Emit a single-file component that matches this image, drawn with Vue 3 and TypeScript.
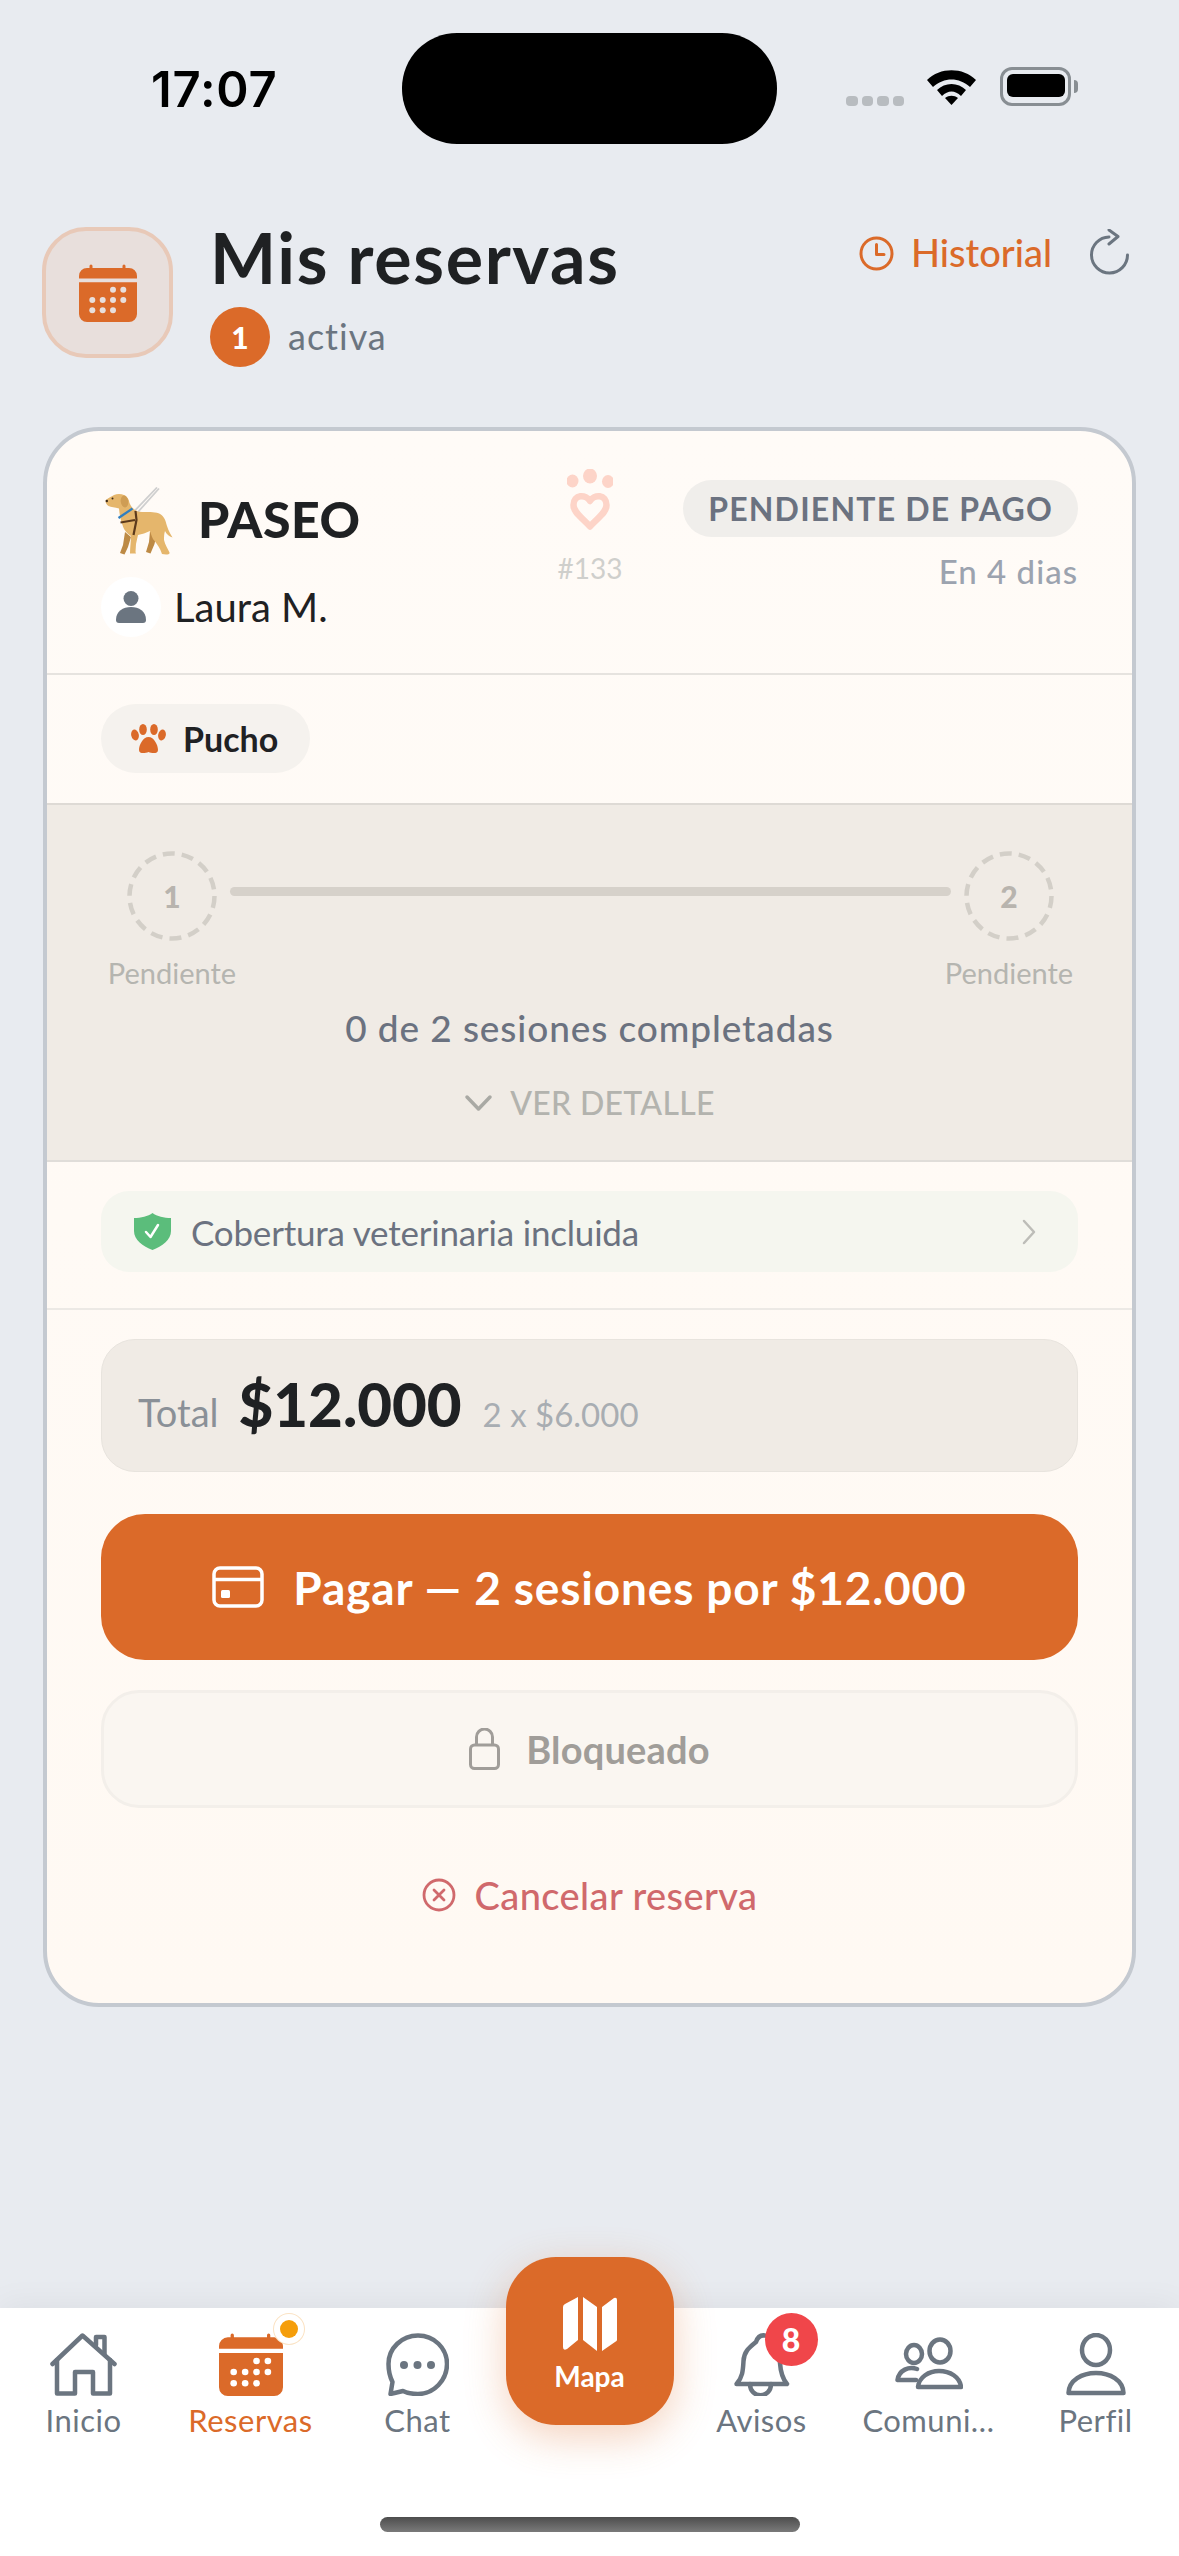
<template>
  <div class="page">
    <div class="status">
      <span class="time">17:07</span>
      <div class="island"></div>
      <div class="status-icons">
        <div class="signal"><i v-for="n in 4" :key="n"></i></div>
        <svg class="wifi" width="51" height="37" viewBox="0 0 51 37">
          <path d="M1 12 C14 -1 37 -1 50 12 L44 19 C33 9 18 9 7 19Z" />
          <path d="M11 22 C19 14 32 14 40 22 L35 28 C29 22 22 22 16 28Z" />
          <path d="M19 30 C23 27 28 27 32 30 L25.500 37Z" />
        </svg>
        <div class="battery"><span></span></div>
        <div class="battery-nub"></div>
      </div>
    </div>

    <header class="header">
      <div class="header-icon">
        <svg width="58" height="58" viewBox="0 0 58 58">
          <path fill="#db6a29" d="M10.500 4 V2 a1.500 1.500 0 0 1 3 0 V4 H43.500 V2 a1.500 1.500 0 0 1 3 0 V4 H50 a8 8 0 0 1 8 8 V14.500 H0 V12 a8 8 0 0 1 8 -8Z M0 18.300 H58 V50 a8 8 0 0 1 -8 8 H8 a8 8 0 0 1 -8 -8Z" />
          <circle v-for="d in calendarDots" :key="d.x + '-' + d.y" :cx="d.x" :cy="d.y" r="3" fill="#e8dfdc" />
        </svg>
      </div>
      <div class="header-text">
        <h1>Mis reservas</h1>
        <div class="count">
          <span class="count-badge">1</span>
          <span class="count-label">activa</span>
        </div>
      </div>
      <div class="header-actions">
        <svg width="35" height="35" viewBox="0 0 35 35" fill="none" stroke="#db6a29" stroke-width="3" stroke-linecap="round" stroke-linejoin="round">
          <circle cx="17.500" cy="17.500" r="15.500" />
          <path d="M17.500 8.500 V18.500 H25" />
        </svg>
        <span class="history">Historial</span>
        <svg class="refresh" width="40" height="46" viewBox="0 0 40 46" fill="none" stroke="#6b7580" stroke-width="3" stroke-linecap="round" stroke-linejoin="round">
          <path d="M19 8 A18 18 0 1 0 37.500 26" />
          <path d="M19 1 L28 7.500 L19 15" />
        </svg>
      </div>
    </header>

    <section class="card">
      <div class="card-top">
        <div class="card-left">
          <div class="service">
            <svg width="68" height="68" viewBox="0 0 68 68">
              <path d="M29.500 24 L52 0.500 M32.500 25.500 L54 1.500" stroke="#cfcfcf" stroke-width="1.800" fill="none" />
              <path fill="#bd8a45" d="M20 45 L18 58 L15 66 L19.500 67.500 L23 60 L26 50Z M45 44 L44 55 L41 65 L45.500 66.500 L49.500 57 L51 50Z" />
              <path fill="#e5b66c" d="M1 13 C4 10 7 9.500 9 8 C12 6.500 16 6.500 19 8 C22 9.500 24 12 24.500 16 C26 20 29 23 33 24.500 C38 25.500 44 24.500 50 25.500 C55 26 59 29 60.500 34 C62 40 64 45 67.500 50.500 C64 49.500 61.500 47 60 44 C59 47 59 50 59 53 C60 58 63 62 64.500 65.500 C65 67 63 67.500 61 67.500 L57 67 C55 61 52 57 50 54.500 C47 52 46.500 48 45 44 C41 46 37 47 33 48 L31 57 L30.500 65 L31 66.500 L25 66.500 C25 60 26 54 26 49 C23 47 19 44 17.500 38 C15.500 33 14.500 27 14 21.500 C10 20.500 6 20 3.500 19 C1 17.500 0 15 1 13Z" />
              <ellipse cx="19.500" cy="14.500" rx="3.800" ry="6" fill="#cf9d54" transform="rotate(-8 19.500 14.500)" />
              <path d="M13.500 31 L27.500 21.500" stroke="#2f7fc1" stroke-width="2.200" fill="none" />
              <path d="M15.500 35.500 L30 33 M30.500 24 L31.500 33 L28.500 48" stroke="#5c3a1c" stroke-width="2.200" fill="none" />
              <circle cx="7.500" cy="11.500" r="1" fill="#3c2a18" />
              <circle cx="1.800" cy="14" r="1.200" fill="#3c2a18" />
            </svg>
            <span class="service-name">PASEO</span>
          </div>
          <div class="carer">
            <span class="avatar">
              <svg width="30" height="32" viewBox="0 0 30 32" fill="#6b7580">
                <circle cx="15" cy="7.500" r="7.500" />
                <path d="M0 29 C0 20 7 16 15 16 C23 16 30 20 30 29 Q30 32 27 32 H3 Q0 32 0 29Z" />
              </svg>
            </span>
            <span class="carer-name">Laura M.</span>
          </div>
        </div>
        <div class="card-logo">
          <svg width="46" height="62" viewBox="0 0 46 62" fill="#fdd4c8">
            <ellipse cx="5.500" cy="12" rx="6" ry="6.500" />
            <ellipse cx="23" cy="7" rx="7" ry="7.500" />
            <ellipse cx="41" cy="12.500" rx="6" ry="6.500" />
            <path fill="none" stroke="#fdd4c8" stroke-width="6.500" stroke-linejoin="round" d="M23 32 C19 25 6.500 25 6.500 36 C6.500 44 16 49 23 57.500 C30 49 39.500 44 39.500 36 C39.500 25 27 25 23 32Z" />
          </svg>
          <span>#133</span>
        </div>
        <div class="card-state">
          <span class="state-pill">PENDIENTE DE PAGO</span>
          <span class="state-when">En 4 dias</span>
        </div>
      </div>

      <div class="card-pet">
        <div class="pet-chip">
          <svg width="35" height="30" viewBox="0 0 35 30" fill="#db6a29">
            <ellipse cx="4" cy="11" rx="3.800" ry="5.500" transform="rotate(-12 4 11)" />
            <ellipse cx="12" cy="5.500" rx="3.800" ry="5.500" />
            <ellipse cx="23" cy="5.500" rx="3.800" ry="5.500" />
            <ellipse cx="31" cy="11" rx="3.800" ry="5.500" transform="rotate(12 31 11)" />
            <path d="M17.500 13 C23 13 27 21 27 26 C27 30 21 29.500 17.500 28 C14 29.500 8 30 8 26 C8 21 12 13 17.500 13Z" />
          </svg>
          <span>Pucho</span>
        </div>
      </div>

      <div class="card-progress">
        <div class="steps">
          <div class="step">
            <span class="step-circle">
              <svg width="90" height="90" viewBox="0 0 90 90">
                <circle cx="45" cy="45" r="42.500" fill="none" stroke="#d3cfc8" stroke-width="4.500" stroke-dasharray="12 7.070" />
              </svg>
              1
            </span>
            <span class="step-label">Pendiente</span>
          </div>
          <div class="step-line"></div>
          <div class="step">
            <span class="step-circle">
              <svg width="90" height="90" viewBox="0 0 90 90">
                <circle cx="45" cy="45" r="42.500" fill="none" stroke="#d3cfc8" stroke-width="4.500" stroke-dasharray="12 7.070" />
              </svg>
              2
            </span>
            <span class="step-label">Pendiente</span>
          </div>
        </div>
        <p class="sessions">0 de 2 sesiones completadas</p>
        <div class="detail">
          <svg width="29" height="18" viewBox="0 0 29 18" fill="none" stroke="#a9a9a4" stroke-width="3.500" stroke-linecap="round" stroke-linejoin="round">
            <path d="M3 3 L14.500 15 L26 3" />
          </svg>
          <span>VER DETALLE</span>
        </div>
      </div>

      <div class="card-cover">
        <div class="cover-chip">
          <svg width="37" height="37" viewBox="0 0 37 37">
            <path fill="#5bbd7b" d="M18.500 0 C23 3.500 30 5 37 5 V18 C37 27 28 33.500 18.500 37 C9 33.500 0 27 0 18 V5 C7 5 14 3.500 18.500 0Z" />
            <path fill="none" stroke="#fff" stroke-width="2.500" stroke-linecap="round" stroke-linejoin="round" d="M12 19 L16.500 24 L24 12" />
          </svg>
          <span class="cover-text">Cobertura veterinaria incluida</span>
          <svg class="cover-arrow" width="14" height="26" viewBox="0 0 14 26" fill="none" stroke="#bdbdb8" stroke-width="2.500" stroke-linecap="round" stroke-linejoin="round">
            <path d="M2 2 L12 13 L2 24" />
          </svg>
        </div>
      </div>

      <div class="card-pay">
        <div class="total">
          <span class="total-label">Total</span>
          <span class="total-value">$12.000</span>
          <span class="total-detail">2 x $6.000</span>
        </div>
        <button class="pay-btn">
          <svg width="52" height="42" viewBox="0 0 52 42" fill="none" stroke="#fff" stroke-width="3.500">
            <rect x="2" y="2" width="48" height="38" rx="6" />
            <path d="M2 13.500 H50" />
            <rect x="9" y="24" width="9" height="8" rx="1.500" fill="#fff" stroke="none" />
          </svg>
          <span>Pagar — 2 sesiones por $12.000</span>
        </button>
        <div class="locked">
          <svg width="31" height="42" viewBox="0 0 31 42" fill="none" stroke="#a09d99" stroke-width="3" stroke-linejoin="round">
            <rect x="1.500" y="17" width="28" height="23.500" rx="4" />
            <path d="M7.500 17 V9 a8 8 0 0 1 16 0 V17" />
          </svg>
          <span>Bloqueado</span>
        </div>
        <div class="cancel">
          <svg width="34" height="34" viewBox="0 0 34 34" fill="none" stroke="#d0696c" stroke-width="2.800" stroke-linecap="round">
            <circle cx="17" cy="17" r="15" />
            <path d="M12 12 L22 22 M22 12 L12 22" />
          </svg>
          <span>Cancelar reserva</span>
        </div>
      </div>
    </section>

    <nav class="nav">
      <div class="tabs">
        <div class="tab">
          <svg class="tab-icon" width="67" height="63" viewBox="0 0 67 63" fill="none" stroke="#6b7580" stroke-width="4.500" stroke-linecap="round" stroke-linejoin="round">
            <path d="M2.500 31 L32.500 2.500 L64.500 31" />
            <path d="M7 27 V60.500 H25 V39 H43 V60.500 H60 V27" />
            <path d="M46 12 V4 H54.500 V21" />
          </svg>
          <span class="tab-label">Inicio</span>
        </div>
        <div class="tab active">
          <span class="tab-wrap">
            <svg class="tab-icon" width="64" height="63" viewBox="0 0 58 58" preserveAspectRatio="none">
              <path fill="#db6a29" d="M10.500 4 V2 a1.500 1.500 0 0 1 3 0 V4 H43.500 V2 a1.500 1.500 0 0 1 3 0 V4 H50 a8 8 0 0 1 8 8 V14.500 H0 V12 a8 8 0 0 1 8 -8Z M0 18.300 H58 V50 a8 8 0 0 1 -8 8 H8 a8 8 0 0 1 -8 -8Z" />
              <circle v-for="d in calendarDots" :key="d.x + '-' + d.y" :cx="d.x" :cy="d.y" r="3" fill="#fff" />
            </svg>
            <i class="dot"></i>
          </span>
          <span class="tab-label">Reservas</span>
        </div>
        <div class="tab">
          <svg class="tab-icon" width="63" height="63" viewBox="0 0 63 63" fill="none" stroke="#6b7580" stroke-width="4.500" stroke-linecap="round" stroke-linejoin="round">
            <path d="M17 58 C23 61 28 61 32 61 C48 61 61 47 61 31 C61 15 48 2.500 32 2.500 C16 2.500 2.500 15 2.500 31 C2.500 40 5 46 6.500 49 L4.500 61 Z" />
            <circle cx="18" cy="32" r="4" fill="#6b7580" stroke="none" />
            <circle cx="31.500" cy="32" r="4" fill="#6b7580" stroke="none" />
            <circle cx="45" cy="32" r="4" fill="#6b7580" stroke="none" />
          </svg>
          <span class="tab-label">Chat</span>
        </div>
        <div class="tab tab-map">
          <div class="map-btn">
            <svg width="54" height="54" viewBox="0 0 54 54" fill="#fff">
              <path d="M0 10 Q0 8 2 7 L15 0 V43 L4 52 Q0 54 0 50Z" />
              <path d="M20 0 L34 10 V54 L20 43Z" />
              <path d="M39 10 L51 1 Q54 0 54 3 V43 Q54 44 52 45 L39 54Z" />
            </svg>
            <span>Mapa</span>
          </div>
        </div>
        <div class="tab">
          <span class="tab-wrap">
            <svg class="tab-icon" width="56" height="63" viewBox="0 0 56 63" fill="none" stroke="#6b7580" stroke-width="4.500" stroke-linecap="round" stroke-linejoin="round">
              <path d="M2.500 51 C9 44 9 36 9.500 28 C10 18 16 14 22 9 C24 3 28 2 31 2.500 C40 3 45 16 46 30 C46.500 38 48 45 53 51 Z" />
              <path d="M16 51 C16 66 37 66 37 51" />
            </svg>
            <b class="badge">8</b>
          </span>
          <span class="tab-label">Avisos</span>
        </div>
        <div class="tab">
          <svg class="tab-icon" width="68" height="63" viewBox="0 0 68 63" fill="none" stroke="#6b7580" stroke-width="4.500" stroke-linecap="round" stroke-linejoin="round">
            <ellipse cx="19" cy="21" rx="8" ry="9" />
            <ellipse cx="45" cy="18" rx="10.500" ry="11.500" />
            <path d="M22 36 C14 33 4 37 2.500 47 H21" />
            <path d="M23 54 C24 44 34 38 44 38 C55 38 65 44 66 54 Z" />
          </svg>
          <span class="tab-label">Comuni…</span>
        </div>
        <div class="tab">
          <svg class="tab-icon" width="60" height="63" viewBox="0 0 60 63" fill="none" stroke="#6b7580" stroke-width="4.500" stroke-linecap="round" stroke-linejoin="round">
            <ellipse cx="30" cy="17" rx="14" ry="15" />
            <path d="M2.500 60 C3 47 16 40 30 40 C44 40 57 47 57.500 60 Z" />
          </svg>
          <span class="tab-label">Perfil</span>
        </div>
      </div>
      <div class="home-bar"></div>
    </nav>
  </div>
</template>

<script setup lang="ts">
interface Dot {
  x: number
  y: number
}

const rows: [number, number[]][] = [
  [25.7, [34, 44.3]],
  [36, [13.3, 23.7, 34, 44.3]],
  [46.3, [13.3, 23.7, 34]],
]

const calendarDots: Dot[] = rows.flatMap(([y, xs]) => xs.map((x) => ({ x, y })))
</script>

<style>
html,
body {
  margin: 0;
  background: #e8ebf0;
}
</style>

<style scoped>
.page {
  width: 1179px;
  height: 2556px;
  display: flex;
  flex-direction: column;
  overflow: hidden;
  background: #e8ebf0;
  font-family: Lato, "Open Sans", sans-serif;
  color: #1f2123;
}

.status {
  display: grid;
  grid-template-columns: 402px 375px 1fr;
  height: 111px;
  margin-top: 33px;
  flex: none;
}

.time {
  padding: 37px 0 0 151px;
  font-family: Inter, sans-serif;
  font-size: 49px;
  line-height: 40px;
  font-weight: 600;
  letter-spacing: 0.8px;
  color: #000;
}

.island {
  background: #000;
  border-radius: 55px;
}

.status-icons {
  display: flex;
  align-items: flex-start;
  padding: 35px 0 0 69px;
}

.signal {
  display: flex;
  gap: 4px;
  margin-top: 28px;
}

.signal i {
  width: 11.5px;
  height: 10px;
  border-radius: 4px;
  background: #b8bcc0;
}

.wifi {
  margin-left: 22px;
  fill: #000;
}

.battery {
  width: 71px;
  height: 39px;
  margin: -1px 0 0 23px;
  padding: 5px;
  box-sizing: border-box;
  border: 3.5px solid #888e93;
  border-radius: 12px;
}

.battery span {
  display: block;
  height: 100%;
  margin: -1.5px;
  border-radius: 6px;
  background: #000;
}

.battery-nub {
  width: 4px;
  height: 13px;
  margin: 12px 0 0 3px;
  border-radius: 0 4px 4px 0;
  background: #888e93;
}

.header {
  display: flex;
  align-items: flex-start;
  flex: none;
  padding: 83px 49px 0 42px;
}

.header-icon {
  display: flex;
  align-items: center;
  justify-content: center;
  width: 131px;
  height: 131px;
  box-sizing: border-box;
  border: 4px solid #e8c9b8;
  border-radius: 44px;
  background: #e8dfdc;
}

.header-text {
  margin: -8px 0 0 37px;
}

h1 {
  margin: 0;
  font-size: 70px;
  line-height: 76px;
  font-weight: 700;
  letter-spacing: 1.6px;
  color: #1f2123;
}

.count {
  display: flex;
  align-items: center;
  gap: 18px;
  margin-top: 12px;
}

.count-badge {
  display: flex;
  align-items: center;
  justify-content: center;
  width: 60px;
  height: 60px;
  border-radius: 50%;
  background: #db6a29;
  color: #fff;
  font-size: 30px;
  font-weight: 900;
}

.count-label {
  margin-top: -2px;
  font-size: 36px;
  letter-spacing: 1px;
  color: #6b7580;
}

.header-actions {
  display: flex;
  align-items: flex-start;
  margin: 2px 0 0 auto;
}

.header-actions > svg:first-child {
  margin-top: 7px;
}

.history {
  margin-left: 17px;
  font-size: 38px;
  line-height: 46px;
  font-weight: 500;
  color: #db6a29;
}

.refresh {
  margin-left: 38px;
}

.card {
  display: flex;
  flex-direction: column;
  flex: none;
  height: 1580px;
  margin: 60px 43px 0;
  box-sizing: border-box;
  overflow: hidden;
  border: 4px solid #c4c9d0;
  border-radius: 56px;
  background: linear-gradient(#fffbf7, #fff9f3);
}

.card-top {
  display: flex;
  height: 242px;
  flex: none;
  box-sizing: content-box;
  padding: 0 54px;
  border-bottom: 2px solid #e6e3df;
}

.card-left {
  width: 462px;
  flex: none;
  margin-left: 4px;
}

.service {
  display: flex;
  align-items: center;
  height: 68px;
  margin-top: 56px;
}

.service-name {
  margin: -5px 0 0 25px;
  font-size: 50px;
  font-weight: 900;
  letter-spacing: 0.5px;
}

.carer {
  display: flex;
  align-items: center;
  margin: 22px 0 0 -4px;
}

.avatar {
  display: flex;
  align-items: center;
  justify-content: center;
  width: 60px;
  height: 60px;
  border-radius: 50%;
  background: #fff;
}

.carer-name {
  margin-left: 13px;
  font-size: 40px;
}

.card-logo {
  display: flex;
  flex-direction: column;
  align-items: center;
  width: 46px;
  padding-top: 38px;
  color: #cfcfcc;
  font-size: 28px;
}

.card-logo span {
  margin-top: 20px;
  line-height: 34px;
}

.card-state {
  display: flex;
  flex-direction: column;
  align-items: flex-end;
  margin-left: auto;
  padding-top: 49px;
}

.state-pill {
  display: flex;
  align-items: center;
  height: 57px;
  padding: 0 25px;
  border-radius: 29px;
  background: #f0eeeb;
  color: #6b7280;
  font-size: 32px;
  font-weight: 700;
  letter-spacing: 1.2px;
  white-space: nowrap;
}

.state-when {
  margin-top: 14px;
  line-height: 40px;
  font-size: 33px;
  font-weight: 500;
  letter-spacing: 1px;
  color: #9ca3af;
}

.card-pet {
  flex: none;
  height: 128px;
  box-sizing: border-box;
  padding: 29px 54px 0;
}

.pet-chip {
  display: inline-flex;
  align-items: center;
  height: 69px;
  padding: 0 32px 0 30px;
  gap: 17px;
  border-radius: 35px;
  background: #f5f2ee;
  font-size: 34px;
  font-weight: 700;
}

.card-progress {
  flex: none;
  height: 359px;
  box-sizing: border-box;
  padding-top: 46px;
  border-top: 2px solid #dedad5;
  border-bottom: 2px solid #e0ddd9;
  background: #f0ebe5;
  text-align: center;
}

.steps {
  display: flex;
  padding: 0 65px 0 67px;
}

.step {
  display: flex;
  flex-direction: column;
  align-items: center;
  width: 116px;
  flex: none;
}

.step-circle {
  position: relative;
  display: flex;
  align-items: center;
  justify-content: center;
  width: 90px;
  height: 90px;
  color: #b8b4ae;
  font-size: 30px;
  font-weight: 900;
}

.step-circle svg {
  position: absolute;
  inset: 0;
}

.step-label {
  margin-top: 15px;
  line-height: 34px;
  font-size: 29px;
  color: #b5b5b0;
  white-space: nowrap;
}

.step-line {
  flex: 1;
  height: 9px;
  margin-top: 36px;
  border-radius: 5px;
  background: #d6d1ca;
}

.sessions {
  margin: 16px 0 0;
  line-height: 44px;
  font-size: 37px;
  font-weight: 500;
  letter-spacing: 0.9px;
  color: #6b7280;
}

.detail {
  display: flex;
  align-items: center;
  justify-content: center;
  gap: 17px;
  margin-top: 33px;
  line-height: 40px;
  font-size: 32px;
  font-weight: 500;
  letter-spacing: 0.3px;
  color: #b3b3ae;
}

.card-cover {
  flex: none;
  height: 148px;
  box-sizing: border-box;
  padding: 29px 54px 0;
  border-bottom: 2px solid #ece9e5;
}

.cover-chip {
  display: flex;
  align-items: center;
  height: 81px;
  padding: 0 42px 0 33px;
  border-radius: 28px;
  background: #f5f6ef;
}

.cover-text {
  margin-left: 20px;
  font-size: 35px;
  letter-spacing: -0.2px;
  color: #6b7280;
}

.cover-arrow {
  margin-left: auto;
}

.card-pay {
  display: flex;
  flex-direction: column;
  padding: 29px 54px 0;
}

.total {
  display: flex;
  align-items: baseline;
  height: 133px;
  box-sizing: border-box;
  padding: 28px 36px 0;
  border: 1.5px solid #e8e4de;
  border-radius: 34px;
  background: #f0ebe5;
}

.total-label {
  font-size: 38px;
  color: #8a9097;
}

.total-value {
  margin-left: 20px;
  font-size: 60px;
  font-weight: 900;
}

.total-detail {
  margin-left: 21px;
  font-size: 33px;
  color: #a8adb2;
}

.pay-btn {
  display: flex;
  align-items: center;
  justify-content: center;
  gap: 29px;
  height: 146px;
  margin-top: 42px;
  border: none;
  border-radius: 44px;
  background: #db6a29;
  color: #fff;
  font-family: inherit;
  font-size: 46px;
  font-weight: 700;
  letter-spacing: 0.85px;
}

.locked {
  display: flex;
  align-items: center;
  justify-content: center;
  gap: 26px;
  height: 118px;
  margin-top: 30px;
  box-sizing: border-box;
  border: 3px solid #f3efea;
  border-radius: 38px;
  background: #faf6f1;
  color: #a09d99;
  font-size: 38px;
  font-weight: 700;
  letter-spacing: 0.2px;
}

.cancel {
  display: flex;
  align-items: center;
  justify-content: center;
  gap: 19px;
  height: 46px;
  margin-top: 64px;
  color: #d0696c;
  font-size: 38px;
  font-weight: 500;
  letter-spacing: 0.4px;
}

.nav {
  display: flex;
  flex-direction: column;
  flex: none;
  height: 248px;
  margin-top: auto;
  background: #fff;
  box-shadow: 0 -4px 30px rgba(0, 0, 0, 0.05);
}

.tabs {
  display: grid;
  grid-template-columns: repeat(3, 167px) 177px repeat(3, 167px);
  flex: 1;
}

.tab {
  display: flex;
  flex-direction: column;
  align-items: center;
  padding-top: 25px;
  color: #6b7580;
}

.tab.active {
  color: #db6a29;
}

.tab-wrap {
  position: relative;
  display: block;
  height: 63px;
}

.tab-icon {
  display: block;
}

.tab-label {
  margin-top: 6px;
  line-height: 36px;
  font-size: 31px;
  letter-spacing: 0.5px;
  white-space: nowrap;
}

.dot {
  position: absolute;
  top: -13px;
  right: -15px;
  width: 18px;
  height: 18px;
  border-radius: 50%;
  background: #f59e0b;
  box-shadow: 0 0 0 6px #fff, 0 0 0 7px #fbe3c4;
}

.badge {
  position: absolute;
  top: -20px;
  right: -28px;
  display: flex;
  align-items: center;
  justify-content: center;
  width: 53px;
  height: 53px;
  border-radius: 50%;
  background: #f0464a;
  color: #fff;
  font-size: 32px;
  font-weight: 900;
}

.tab-map {
  padding-top: 0;
}

.map-btn {
  display: flex;
  flex-direction: column;
  align-items: center;
  width: 168px;
  height: 168px;
  margin-top: -51px;
  padding-top: 40px;
  box-sizing: border-box;
  border-radius: 50px;
  background: #db6a29;
  box-shadow: 0 12px 40px rgba(219, 106, 41, 0.3);
  color: #fff;
  font-size: 28px;
  font-weight: 700;
}

.map-btn span {
  margin-top: 8px;
  line-height: 34px;
}

.home-bar {
  width: 420px;
  height: 15px;
  margin: 0 auto 24px;
  border-radius: 8px;
  background: linear-gradient(#4d4d4d, #7a7a7a);
}
</style>
